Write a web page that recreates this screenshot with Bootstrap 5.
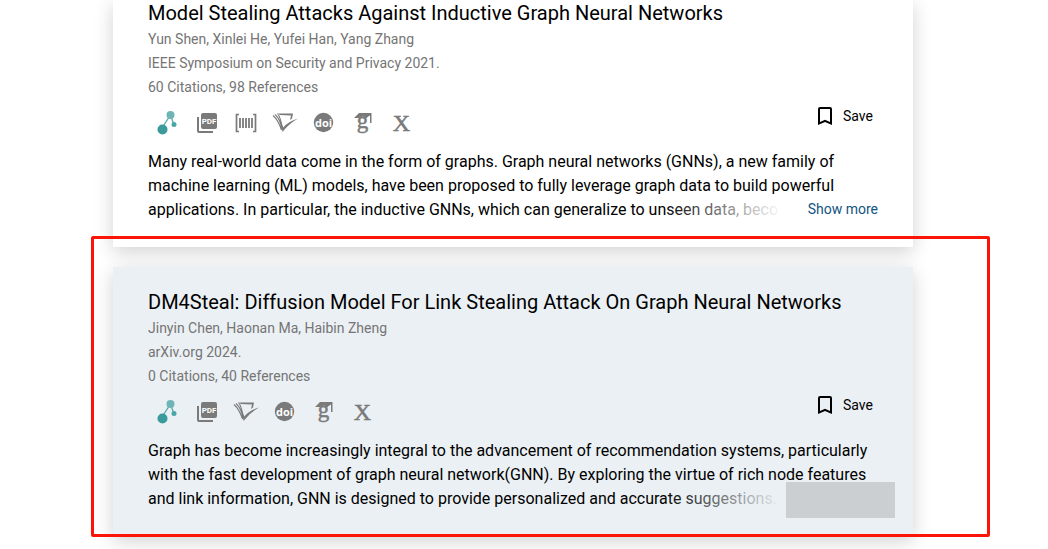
<!DOCTYPE html>
<html lang="en">
<head>
<meta charset="utf-8">
<meta name="viewport" content="width=device-width, initial-scale=1">
<title>Papers</title>
<link href="https://cdn.jsdelivr.net/npm/bootstrap@5.3.0/dist/css/bootstrap.min.css" rel="stylesheet">
<style>
  body { font-family: Roboto, "Liberation Sans", sans-serif; color: #000; background: #fff; overflow-x: hidden; }
  .results { max-width: 800px; gap: 20px; padding-bottom: 20px; position: relative; left: -11px; }
  .paper { --paper-bg: #fff; background: var(--paper-bg); padding: 0 35px 25px; box-shadow: 0 5px 18px rgba(0,0,0,.18); }
  .paper-active { --paper-bg: #ebf0f4; padding-top: 22px; }
  .paper-title { font-size: 20px; line-height: 27px; font-weight: 400; }
  .meta { font-size: 14px; line-height: 24px; color: #757575; }
  .tools { height: 51px; }
  .sources { margin-top: 11px; }
  .source { width: 39px; height: 26px; color: #7a7a7a; }
  .save { font-size: 14px; line-height: 24px; color: #000; gap: 6px; margin: 5px 5px 0 0; }
  .abstract { font-size: 16px; line-height: 24px; height: 72px; }
  .more-row { right: 0; bottom: 0; width: 215px; height: 24px; background: linear-gradient(to right, transparent, var(--paper-bg) 120px); }
  .more { right: 0; bottom: 0; font-size: 14px; line-height: 26px; color: #115481; }
  .more-blank { right: -17px; bottom: -7px; width: 109px; height: 36px; background: #cbcfd2; }
  .marker { inset: -31px -77px -1px -22px; border: 3px solid #fb1509; border-radius: 2px; pointer-events: none; }
</style>
</head>
<body>
<svg width="0" height="0" class="position-absolute" aria-hidden="true">
  <defs>
    <symbol id="i-graph" viewBox="0 0 26 26">
      <path d="M7 18 15.500 5 19 15" fill="none" stroke="#57a9aa" stroke-width="1.300"/>
      <circle cx="15.500" cy="5" r="4" fill="#70b5b6"/><circle cx="7.500" cy="19.500" r="5" fill="#3b9a9b"/><circle cx="19" cy="14.500" r="2.500" fill="#4aa5a6"/>
    </symbol>
    <symbol id="i-pdf" viewBox="0 0 26 26">
      <path d="M4 7v14a1 1 0 0 0 1 1h14" fill="none" stroke="currentColor" stroke-width="2"/>
      <rect x="7" y="3" width="16" height="16" rx="2" fill="currentColor"/>
      <text x="15" y="14" text-anchor="middle" font-family="Roboto, sans-serif" font-size="8" font-weight="700" fill="#fff">PDF</text>
    </symbol>
    <symbol id="i-code" viewBox="0 0 26 26">
      <path d="M6 4.500H3.500v17H6M20 4.500h2.500v17H20" fill="none" stroke="currentColor" stroke-width="1.700"/>
      <path d="M7 8v10M10 8v10M13 8v10M16 8v10M19 8v10" stroke="currentColor" stroke-width="1.800"/>
    </symbol>
    <symbol id="i-scholar" viewBox="0 0 26 26">
      <path d="M1 5.500C5 9 7.500 14 9.500 20M3 4.500C7 8 9 13 10 19.500M5.500 3.500C8.500 7 9.500 13 10.500 19" fill="none" stroke="currentColor" stroke-width="1.100"/>
      <path d="M6 3.500h15l-1 5-2 1.500 1-4.500-11-.500Z" fill="currentColor"/>
      <path d="M9 12l2.300 5.500Q16 11.500 26 8.500 17 13.500 10.500 22Z" fill="currentColor"/>
    </symbol>
    <symbol id="i-doi" viewBox="0 0 26 26">
      <circle cx="12.500" cy="12.500" r="9.700" fill="currentColor"/>
      <text x="12.500" y="16.500" text-anchor="middle" font-family="'Open Sans', sans-serif" font-size="11" font-weight="700" fill="#fff">doi</text>
    </symbol>
    <symbol id="i-google" viewBox="0 0 26 26">
      <path d="M4 8 9 3h12.500v10H20V5.500L17.500 7l-2 1.500-2.500-2-4 1.500Z" fill="currentColor"/>
      <text x="12.500" y="18" text-anchor="middle" font-family="'Liberation Serif', serif" font-size="23" font-weight="400" stroke="currentColor" stroke-width=".5" fill="currentColor">g</text>
    </symbol>
    <symbol id="i-x" viewBox="0 0 26 26">
      <text x="12.500" y="21" text-anchor="middle" font-family="'Liberation Serif', serif" font-size="24" fill="currentColor" stroke="currentColor" stroke-width=".5">X</text>
    </symbol>
    <symbol id="i-save" viewBox="0 0 24 24">
      <path d="M17 3H7a2 2 0 0 0-2 2v16l7-3 7 3V5a2 2 0 0 0-2-2zm0 15-5-2.180L7 18V5h10z" fill="currentColor"/>
    </symbol>
  </defs>
</svg>

<main class="results mx-auto d-flex flex-column">
  <article class="paper">
    <h2 class="paper-title m-0">Model Stealing Attacks Against Inductive Graph Neural Networks</h2>
    <div class="meta">
      <div>Yun Shen, Xinlei He, Yufei Han, Yang Zhang</div>
      <div>IEEE Symposium on Security and Privacy 2021.</div>
      <div>60 Citations, 98 References</div>
    </div>
    <div class="tools d-flex justify-content-between align-items-start">
      <nav class="sources d-flex" aria-label="Paper sources">
        <a class="source d-flex justify-content-center" href="#" aria-label="Graph"><svg width="26" height="26"><use href="#i-graph"/></svg></a>
        <a class="source d-flex justify-content-center" href="#" aria-label="PDF file"><svg width="26" height="26"><use href="#i-pdf"/></svg></a>
        <a class="source d-flex justify-content-center" href="#" aria-label="Citation code"><svg width="26" height="26"><use href="#i-code"/></svg></a>
        <a class="source d-flex justify-content-center" href="#" aria-label="Semantic Scholar"><svg width="26" height="26"><use href="#i-scholar"/></svg></a>
        <a class="source d-flex justify-content-center" href="#" aria-label="DOI link"><svg width="26" height="26"><use href="#i-doi"/></svg></a>
        <a class="source d-flex justify-content-center" href="#" aria-label="Google Scholar"><svg width="26" height="26"><use href="#i-google"/></svg></a>
        <a class="source d-flex justify-content-center" href="#" aria-label="arXiv"><svg width="26" height="26"><use href="#i-x"/></svg></a>
      </nav>
      <button type="button" class="save btn p-0 border-0 d-flex align-items-center"><svg width="24" height="24"><use href="#i-save"/></svg>Save</button>
    </div>
    <div class="position-relative">
      <p class="abstract m-0 overflow-hidden">Many real-world data come in the form of graphs. Graph neural networks (GNNs), a new family of machine learning (ML) models, have been proposed to fully leverage graph data to build powerful applications. In particular, the inductive GNNs, which can generalize to unseen data, beco</p>
      <div class="more-row position-absolute"></div>
      <button type="button" class="more btn p-0 border-0 position-absolute">Show more</button>
    </div>
  </article>

  <div class="position-relative">
    <article class="paper paper-active">
      <h2 class="paper-title m-0">DM4Steal: Diffusion Model For Link Stealing Attack On Graph Neural Networks</h2>
      <div class="meta">
        <div>Jinyin Chen, Haonan Ma, Haibin Zheng</div>
        <div>arXiv.org 2024.</div>
        <div>0 Citations, 40 References</div>
      </div>
      <div class="tools d-flex justify-content-between align-items-start">
        <nav class="sources d-flex" aria-label="Paper sources">
          <a class="source d-flex justify-content-center" href="#" aria-label="Graph"><svg width="26" height="26"><use href="#i-graph"/></svg></a>
          <a class="source d-flex justify-content-center" href="#" aria-label="PDF file"><svg width="26" height="26"><use href="#i-pdf"/></svg></a>
          <a class="source d-flex justify-content-center" href="#" aria-label="Semantic Scholar"><svg width="26" height="26"><use href="#i-scholar"/></svg></a>
          <a class="source d-flex justify-content-center" href="#" aria-label="DOI link"><svg width="26" height="26"><use href="#i-doi"/></svg></a>
          <a class="source d-flex justify-content-center" href="#" aria-label="Google Scholar"><svg width="26" height="26"><use href="#i-google"/></svg></a>
          <a class="source d-flex justify-content-center" href="#" aria-label="arXiv"><svg width="26" height="26"><use href="#i-x"/></svg></a>
        </nav>
        <button type="button" class="save btn p-0 border-0 d-flex align-items-center"><svg width="24" height="24"><use href="#i-save"/></svg>Save</button>
      </div>
      <div class="position-relative">
        <p class="abstract m-0 overflow-hidden">Graph has become increasingly integral to the advancement of recommendation systems, particularly with the fast development of graph neural network(GNN). By exploring the virtue of rich node features and link information, GNN is designed to provide personalized and accurate suggestions.</p>
        <div class="more-row position-absolute"></div>
        <button type="button" class="more-blank btn p-0 border-0 rounded-0 position-absolute" aria-label="Show more"></button>
      </div>
    </article>
    <div class="marker position-absolute"></div>
  </div>
</main>
<script src="https://cdn.jsdelivr.net/npm/bootstrap@5.3.0/dist/js/bootstrap.bundle.min.js"></script>
</body>
</html>
